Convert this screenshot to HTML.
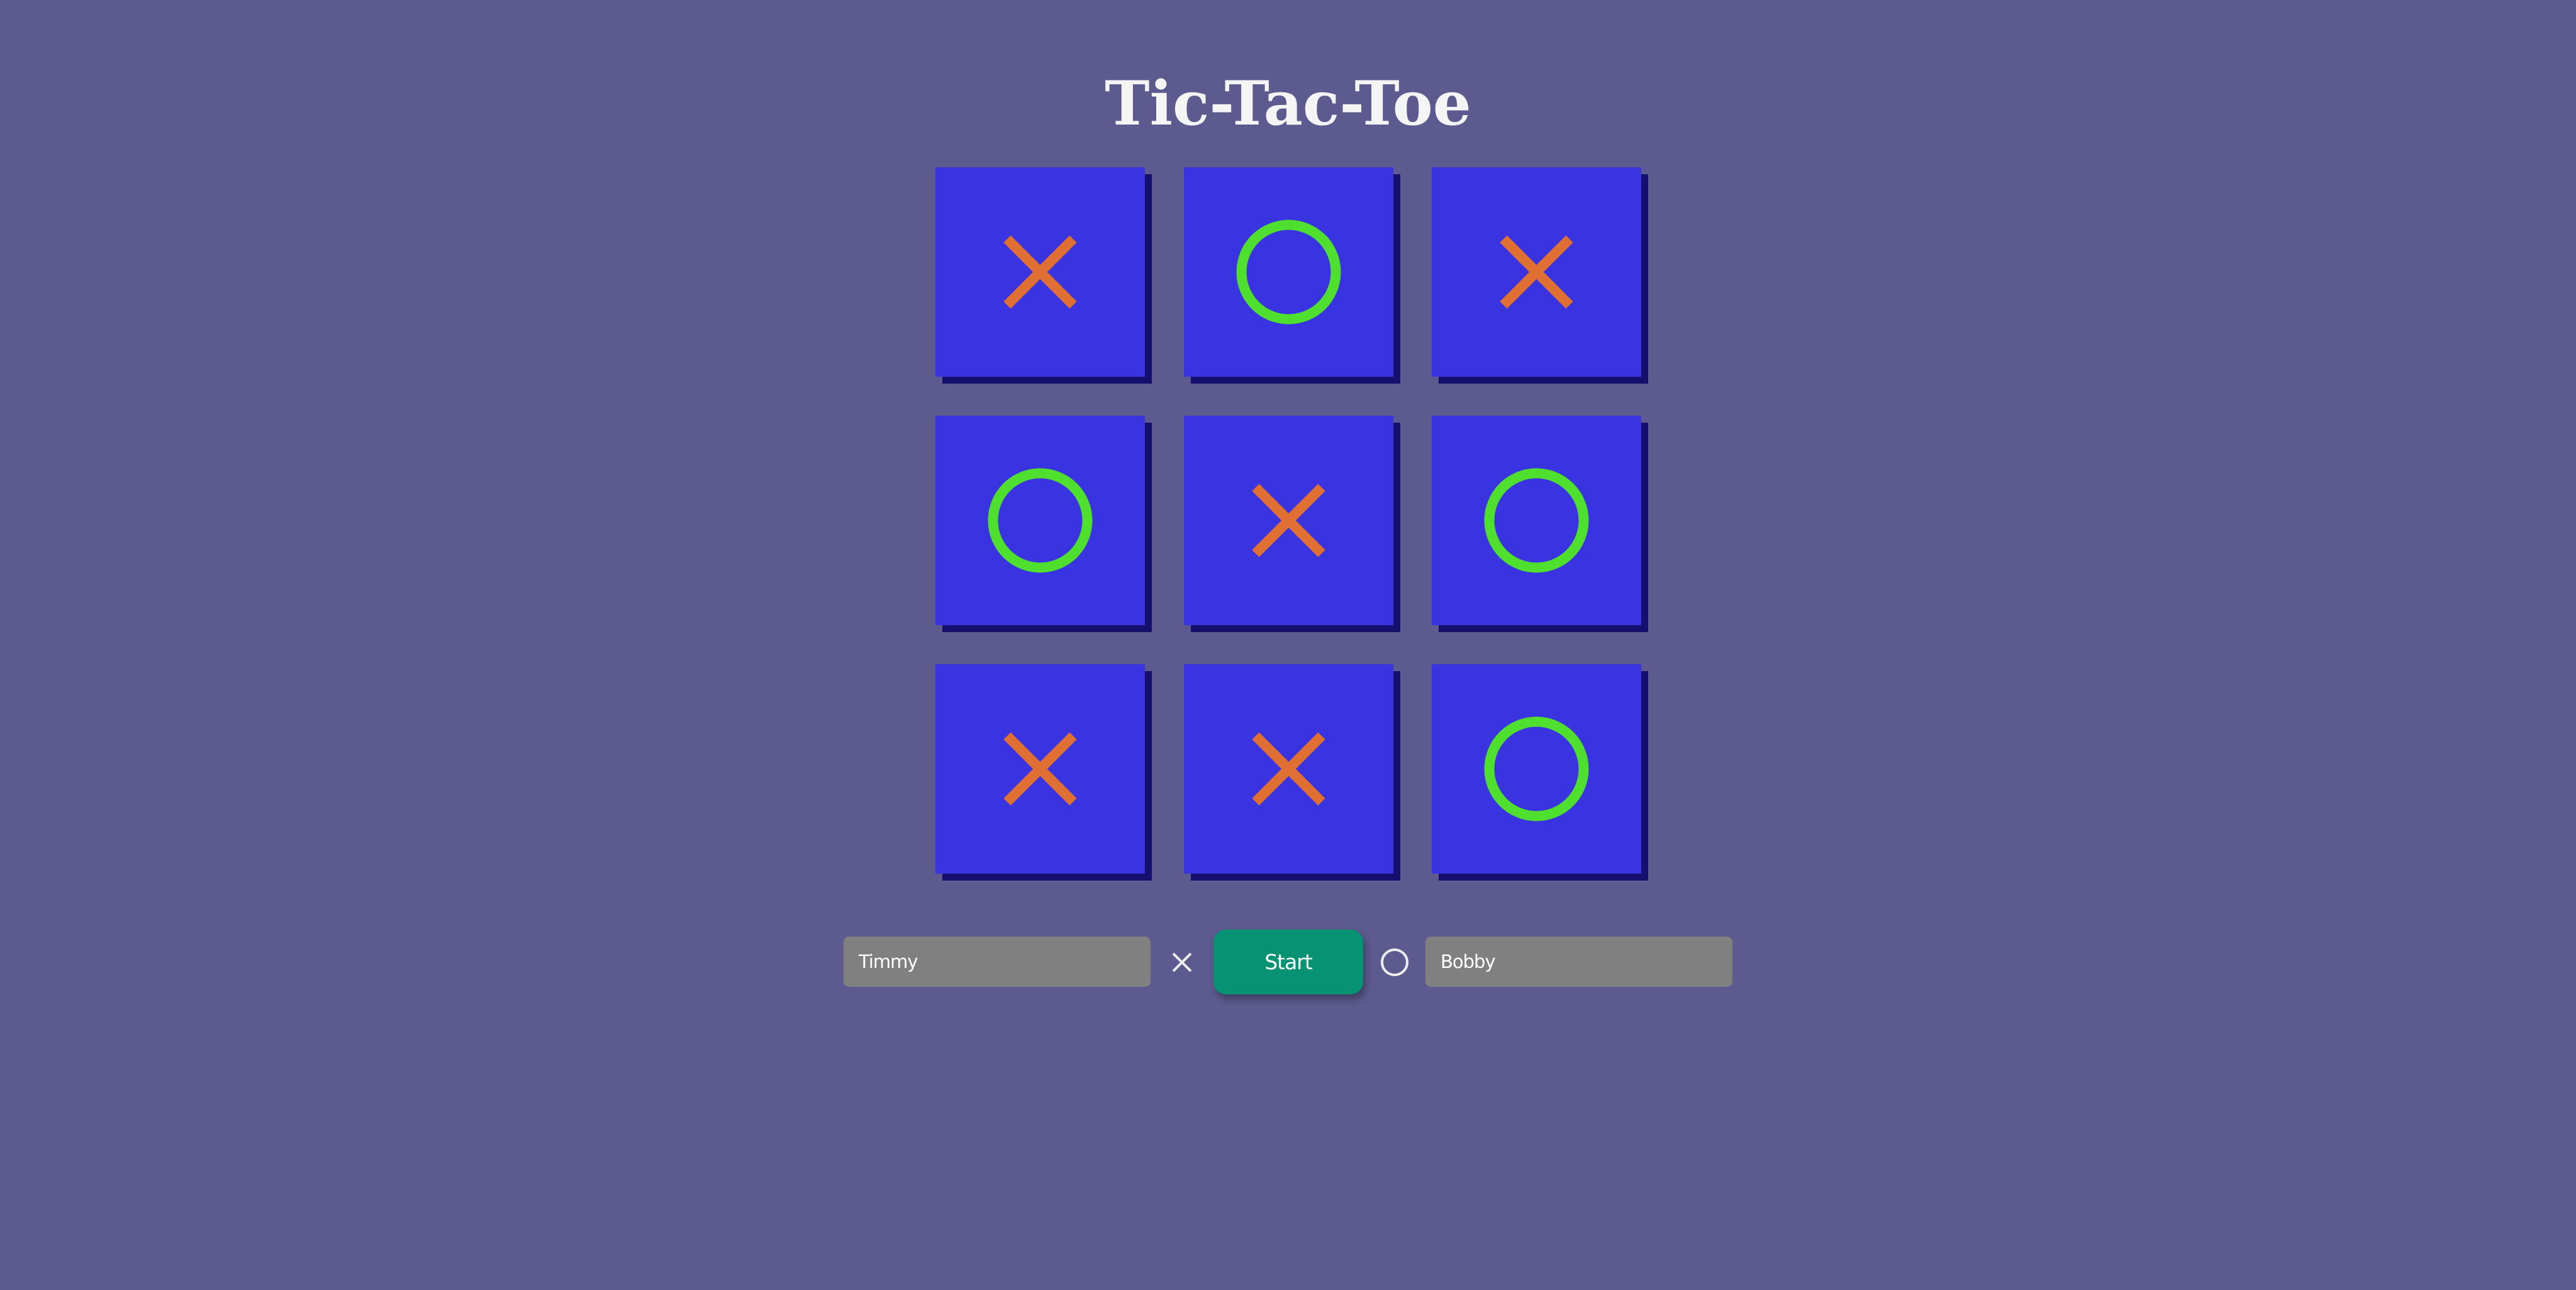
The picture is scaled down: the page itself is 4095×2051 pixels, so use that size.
<!DOCTYPE html>
<html><head><meta charset="utf-8"><style>
html,body{margin:0;padding:0;width:4095px;height:2051px;background:#5c5a8e;overflow:hidden;position:relative;font-family:"DejaVu Sans","Liberation Sans",sans-serif}
h1{position:absolute;left:0;width:4095px;top:105px;margin:0;text-align:center;font-family:"DejaVu Serif","Liberation Serif",serif;font-weight:bold;font-size:96px;line-height:120px;color:#f5f5f5}
.c{position:absolute;width:333px;height:333px;background:#3933e0;box-shadow:11px 11px 0 #15106e}
.c svg{position:absolute;left:0;top:0}
.in{position:absolute;top:1489px;width:488px;height:80px;background:#808080;border-radius:9px;color:#fff;font-size:29px;line-height:80px;box-sizing:border-box;padding-left:24px;letter-spacing:-1px}
.btn{position:absolute;left:1929px;top:1478px;width:238px;height:103px;background:#069373;border-radius:20px;color:#fff;font-size:33px;line-height:103px;text-align:center;box-shadow:4px 8px 10px rgba(0,0,0,.3);letter-spacing:-1px}
</style></head><body>
<h1>Tic-Tac-Toe</h1>
<div class="c" style="left:1487px;top:266px"><svg width="333" height="333"><path d="M114 114L219 219M219 114L114 219" stroke="#df6f32" stroke-width="16"/></svg></div>
<div class="c" style="left:1882px;top:266px"><svg width="333" height="333"><circle cx="166.5" cy="166.5" r="75" fill="none" stroke="#4fdf2f" stroke-width="16"/></svg></div>
<div class="c" style="left:2276px;top:266px"><svg width="333" height="333"><path d="M114 114L219 219M219 114L114 219" stroke="#df6f32" stroke-width="16"/></svg></div>
<div class="c" style="left:1487px;top:661px"><svg width="333" height="333"><circle cx="166.5" cy="166.5" r="75" fill="none" stroke="#4fdf2f" stroke-width="16"/></svg></div>
<div class="c" style="left:1882px;top:661px"><svg width="333" height="333"><path d="M114 114L219 219M219 114L114 219" stroke="#df6f32" stroke-width="16"/></svg></div>
<div class="c" style="left:2276px;top:661px"><svg width="333" height="333"><circle cx="166.5" cy="166.5" r="75" fill="none" stroke="#4fdf2f" stroke-width="16"/></svg></div>
<div class="c" style="left:1487px;top:1056px"><svg width="333" height="333"><path d="M114 114L219 219M219 114L114 219" stroke="#df6f32" stroke-width="16"/></svg></div>
<div class="c" style="left:1882px;top:1056px"><svg width="333" height="333"><path d="M114 114L219 219M219 114L114 219" stroke="#df6f32" stroke-width="16"/></svg></div>
<div class="c" style="left:2276px;top:1056px"><svg width="333" height="333"><circle cx="166.5" cy="166.5" r="75" fill="none" stroke="#4fdf2f" stroke-width="16"/></svg></div>
<div class="in" style="left:1341px">Timmy</div>
<svg style="position:absolute;left:1862px;top:1513px" width="34" height="34"><path d="M3 3L31 31M31 3L3 31" stroke="#eee" stroke-width="4"/></svg>
<div class="btn">Start</div>
<svg style="position:absolute;left:2193px;top:1506px" width="48" height="48"><circle cx="24" cy="24" r="20" fill="none" stroke="#eee" stroke-width="4"/></svg>
<div class="in" style="left:2266px">Bobby</div>
</body></html>
